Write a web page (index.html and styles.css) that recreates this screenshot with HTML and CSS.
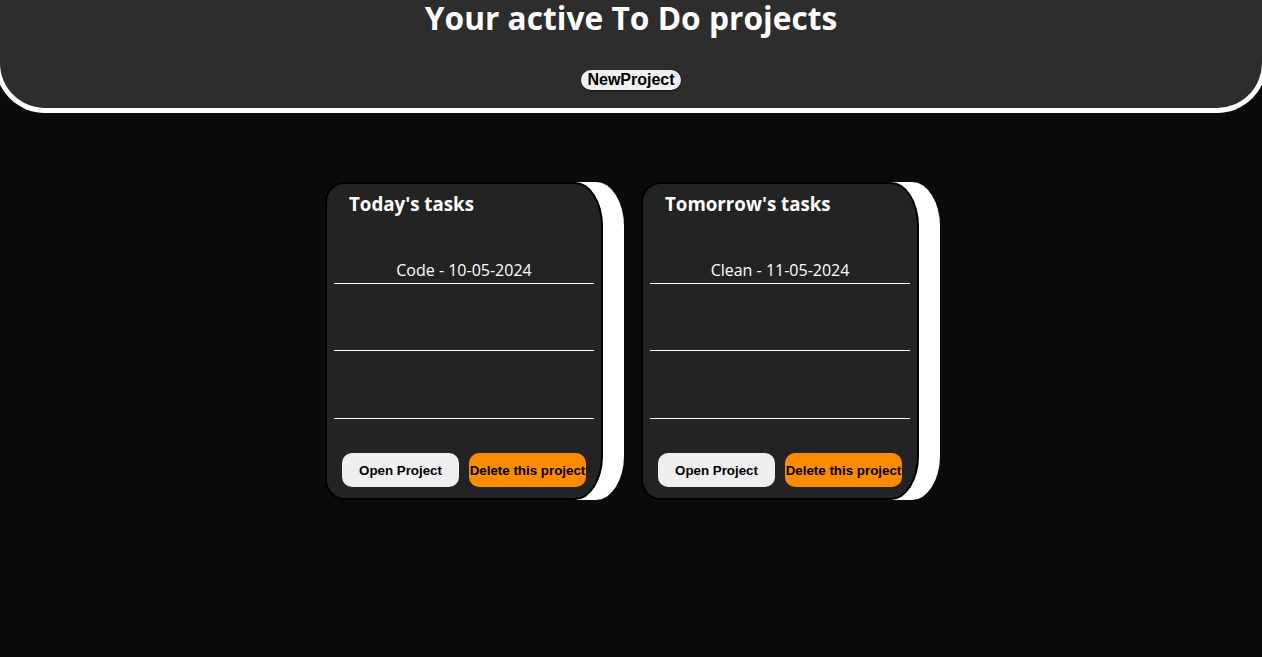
FILE: index.html
```html
<!DOCTYPE html>
<html lang="en">
<head>
<meta charset="utf-8">
<title>To Do projects</title>
<link rel="stylesheet" href="styles.css">
</head>
<body>
<header class="top">
  <h1 class="title">Your active To Do projects</h1>
  <button class="new-btn">NewProject</button>
</header>
<main class="projects">
  <section class="card">
    <h2 class="card-title">Today's tasks</h2>
    <ul class="tasks">
      <li class="task">Code - 10-05-2024</li>
      <li class="task"></li>
      <li class="task"></li>
    </ul>
    <div class="actions">
      <button class="btn open">Open Project</button>
      <button class="btn del">Delete this project</button>
    </div>
  </section>
  <section class="card">
    <h2 class="card-title">Tomorrow's tasks</h2>
    <ul class="tasks">
      <li class="task">Clean - 11-05-2024</li>
      <li class="task"></li>
      <li class="task"></li>
    </ul>
    <div class="actions">
      <button class="btn open">Open Project</button>
      <button class="btn del">Delete this project</button>
    </div>
  </section>
</main>
</body>
</html>
```

FILE: styles.css
```css
html, body {
  margin: 0;
  padding: 0;
}
body {
  background: #0a0a0a;
  font-family: "Open Sans", "Liberation Sans", sans-serif;
  color: #fff;
  min-height: 657px;
  overflow-x: hidden;
}
.top {
  background: #2d2d2d;
  border: 5px solid #fff;
  border-top: none;
  border-radius: 0 0 50px 50px;
  height: 113px;
  box-sizing: border-box;
  margin: 0 -5px;
  display: flex;
  flex-direction: column;
  align-items: center;
}
.title {
  margin: -4px 0 0;
  font-size: 31.7px;
  font-weight: 700;
  line-height: 44px;
}
.new-btn {
  margin-top: 30px;
  font-family: "Liberation Sans", Arial, sans-serif;
  font-size: 16px;
  font-weight: 700;
  color: #000;
  background: #efefef;
  border: none;
  border-radius: 10px;
  padding: 1px 6px;
  height: 20px;
  line-height: 18px;
  box-shadow: 0 1px 2px rgba(0,0,0,0.6);
}
.projects {
  display: flex;
  justify-content: center;
  gap: 38px;
  padding: 69px 18px 0 0;
}
.card {
  width: 278px;
  height: 318px;
  box-sizing: border-box;
  background: #232323;
  border: 2px solid #000;
  border-radius: 20px 28px 28px 20px / 20px 44px 44px 20px;
  box-shadow: 21px 0 0 #fff;
  padding: 0 7px;
  display: flex;
  flex-direction: column;
}
.card-title {
  margin: 8px 0 0 15px;
  font-size: 18.72px;
  font-weight: 700;
  line-height: 24px;
}
.tasks {
  list-style: none;
  margin: 43px 0 0;
  padding: 0;
}
.task {
  border-bottom: 1px solid #fff;
  box-sizing: border-box;
  font-size: 16px;
  text-align: center;
  line-height: 22px;
  height: 68px;
}
.task:first-child {
  height: 25px;
}
.task:nth-child(2) {
  height: 67px;
}
.actions {
  display: flex;
  justify-content: space-between;
  padding: 0 8px;
  margin-top: 34px;
}
.btn {
  width: 117px;
  height: 34px;
  border: none;
  border-radius: 10px;
  font-family: "Liberation Sans", Arial, sans-serif;
  font-size: 13.33px;
  font-weight: 700;
  color: #000;
  padding: 0;
  white-space: nowrap;
}
.open {
  background: #efefef;
}
.del {
  background: #fb8c00;
}
```
